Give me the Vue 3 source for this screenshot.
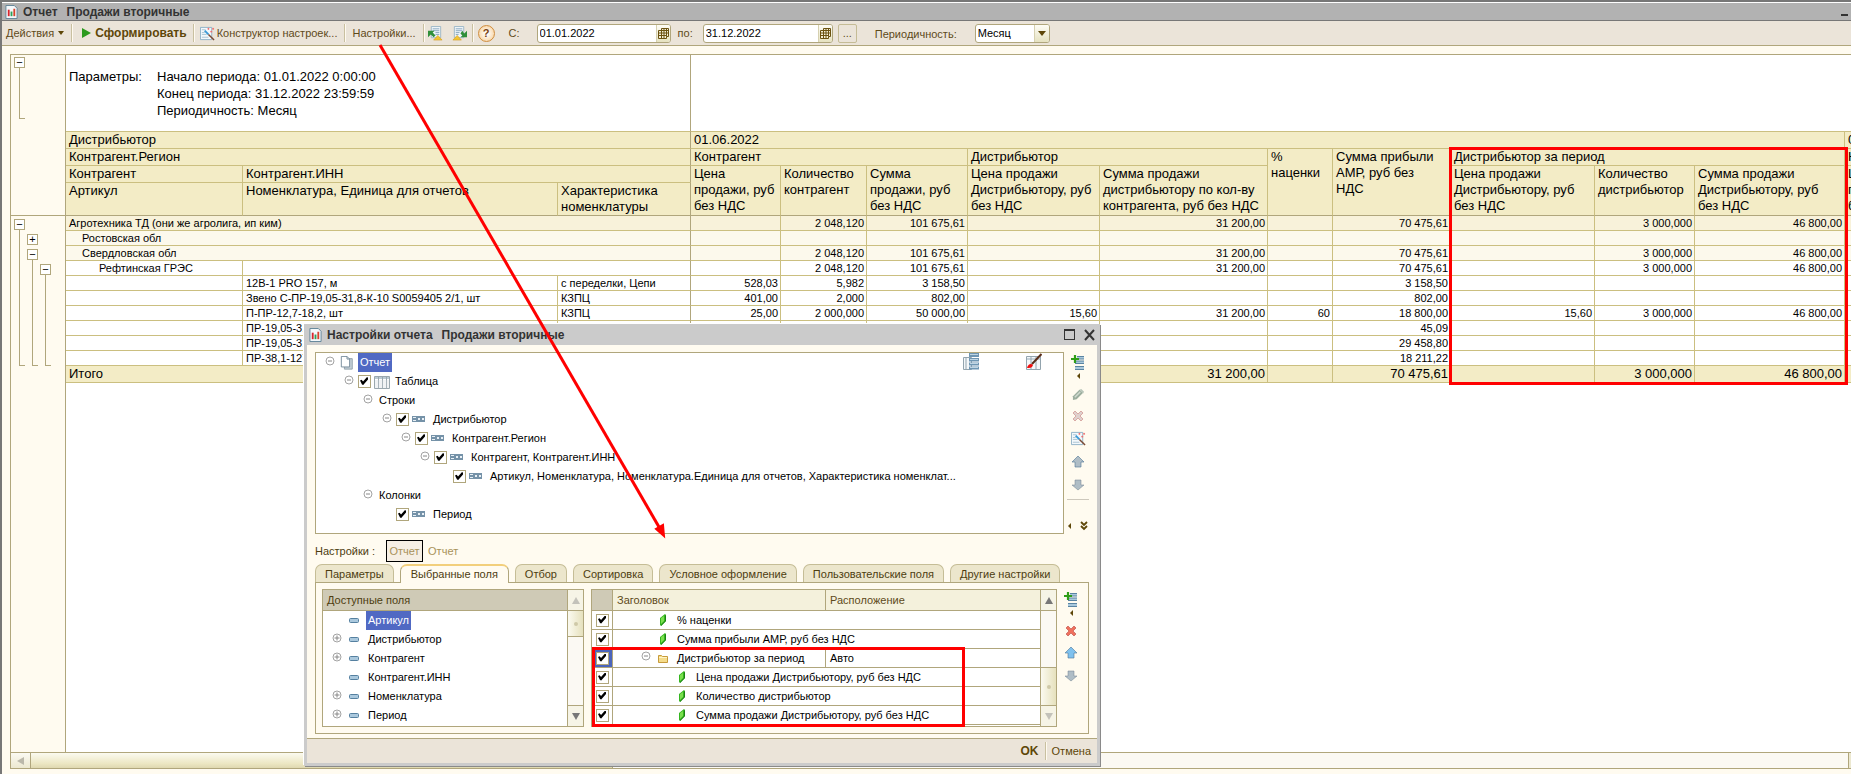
<template>
  <div class="window">
    <svg class="symbols" aria-hidden="true">
      <symbol id="i-report" viewBox="0 0 14 15">
        <path d="M1 .5h9l3 3v11H1z" fill="#f4f8fb" stroke="#5f8397" />
        <path d="M3 5h2v7H3z" fill="#d8262c" />
        <path d="M6 7h2v5H6z" fill="#2fa05a" />
        <path d="M9 4h2v8H9z" fill="#d8432c" />
      </symbol>
      <symbol id="i-wand" viewBox="0 0 16 16">
        <path d="M.5 1.500h12v13H.5z" fill="#f3f8fb" stroke="#8fb1c6" />
        <path d="M2 4h4M2 7h3M2 9h5M2 12h7" stroke="#a9c3d2" />
        <path d="M5 5l4 4" stroke="#3c9ad6" stroke-width="2" />
        <path d="M9 9l6 6" stroke="#7a4a35" stroke-width="1.600" />
        <path d="M8 3h2M9 2v2M13 3h2M14 2v2M11 6h2M12 5v2" stroke="#f06a6a" />
      </symbol>
      <symbol id="i-save" viewBox="0 0 16 16">
        <path d="M3.500.5h10v12h-10z" fill="#eef4f8" stroke="#9db6c6" />
        <path d="M5 3h7M5 5h7M8 7h4M8 9h4" stroke="#86a8bf" />
        <path d="M0 5h7L5 7l3 3-2 2-3-3-3 3z" fill="#2f8f3a" />
        <path d="M10.500 10l4.500 5H6z" fill="#f2c533" stroke="#d09a1c" stroke-width=".6" />
      </symbol>
      <symbol id="i-load" viewBox="0 0 16 16">
        <path d="M2.500.5h10v12h-10z" fill="#eef4f8" stroke="#9db6c6" />
        <path d="M4 3h7M4 5h7M4 7h4M4 9h3" stroke="#86a8bf" />
        <path d="M16 12H9l2-2-2-2 2-3 2 3 3-3z" fill="#2f8f3a" />
        <path d="M5.500 10l4.500 5H1z" fill="#f2c533" stroke="#d09a1c" stroke-width=".6" />
      </symbol>
      <symbol id="i-calendar" viewBox="0 0 11 11">
        <path d="M3.500.5h7v8h-2v2h-8v-8h3z" fill="#f4efd8" stroke="#6b5210" />
        <path d="M1 5h9.500M1 7.500h8M3.500 2v8.500M6 .5v10M8.500 .5v8M3 2.500h7" stroke="#6b5210" />
      </symbol>
      <symbol id="i-minus" viewBox="0 0 10 10">
        <circle cx="5" cy="5" r="4" fill="#fff" stroke="#a3a3a3" />
        <path d="M3 5h4" stroke="#888" />
      </symbol>
      <symbol id="i-plus" viewBox="0 0 10 10">
        <circle cx="5" cy="5" r="4" fill="#fff" stroke="#a3a3a3" />
        <path d="M2.500 5h5M5 2.500v5" stroke="#888" />
      </symbol>
      <symbol id="i-pages" viewBox="0 0 16 16">
        <path d="M5 3h9v12H5z" fill="#c5d0d8" stroke="#8c9ba6" />
        <path d="M1.500.5H8l3 3v9H1.500z" fill="#fff" stroke="#6d8494" />
        <path d="M8 .5v3h3" fill="none" stroke="#6d8494" />
      </symbol>
      <symbol id="i-grid" viewBox="0 0 16 14">
        <path d="M.5 1.500h15v12H.5z" fill="#fff" stroke="#9aa7ae" />
        <path d="M1 2h14v2H1z" fill="#bccbd4" />
        <path d="M4.500 2v11M8.500 2v11M12.500 2v11" stroke="#9aa7ae" />
        <path d="M1 6h14M1 8h14M1 10h14M1 12h14" stroke="#ccd5da" stroke-width=".6" />
      </symbol>
      <symbol id="i-group" viewBox="0 0 16 14">
        <path d="M0 3h13v6H0z" fill="#7592a8" />
        <path d="M1 4h3v1H1zM1 7h3v1H1zM6 5h2v2H6zM10 5h2v2h-2z" fill="#e8f0f6" />
      </symbol>
      <symbol id="i-field" viewBox="0 0 10 5">
        <rect x=".5" y=".5" width="9" height="4" rx="1" fill="#aac8dd" stroke="#5580a0" />
      </symbol>
      <symbol id="i-resource" viewBox="0 0 8 12">
        <path d="M1 4l5-4 1 1v6l-5 5-1-1z" fill="#35b520" />
        <path d="M2 4l3-2v5l-3 3z" fill="#7be04f" />
        <path d="M6 1l1 1v5l-5 5v-1l4-4z" fill="#1c7f14" />
      </symbol>
      <symbol id="i-folder" viewBox="0 0 10 9">
        <path d="M.5 1.500h3l1 1h5v6h-9z" fill="#f5dc8a" stroke="#c79b3b" />
        <path d="M1 3.500h8" stroke="#fff4c8" />
      </symbol>
      <symbol id="i-add" viewBox="0 0 14 16">
        <path d="M6 1h7v3H6zM4 6h9v3H4zM4 11h9v4H4z" fill="#a9c8dc" />
        <path d="M6 1.500h7M4 8.500h9M4 14.500h9M6 4h7M4 11.500h9M5 6h8" stroke="#5a84a2" />
        <path d="M4 0v8M0 4h8" stroke="#2f9e18" stroke-width="2.200" />
      </symbol>
      <symbol id="i-pencil" viewBox="0 0 14 14">
        <path d="M1 13V9l7-7 4 3-7 7z" fill="#9cae9e" />
        <path d="M3 10l6-6" stroke="#d0dad0" stroke-width="1.500" />
        <path d="M8 2l2-1 3 3-1 2z" fill="#b9c6ba" />
      </symbol>
      <symbol id="i-delete" viewBox="0 0 12 12">
        <path d="M3 1l3 3 3-3 2 2-3 3 3 3-2 2-3-3-3 3-2-2 3-3-3-3z" fill="currentColor" stroke="#a33" stroke-opacity=".5" />
      </symbol>
      <symbol id="i-up" viewBox="0 0 14 14">
        <path d="M7 1l6 6h-3v5H4V7H1z" fill="currentColor" stroke="#4f7796" stroke-opacity=".6" />
      </symbol>
      <symbol id="i-down" viewBox="0 0 14 14">
        <path d="M7 12L1 7h3V2h6v5h3z" fill="currentColor" stroke="#6f8290" stroke-opacity=".5" />
      </symbol>
      <symbol id="i-level" viewBox="0 0 16 17">
        <path d="M.5 4.500h8v12h-8zM3 4v12" fill="#f4f7f9" stroke="#93a4ae" />
        <path d="M6 0h10v4H6zM6 5h10v3.500H6zM6 9.500h10v3H6zM6 13.500h10v3H6z" fill="#6e96b3" />
        <path d="M7 1.500h8M7 6.500h8M7 10.500h8M7 14.500h8" stroke="#bdd4e3" />
      </symbol>
      <symbol id="i-brush" viewBox="0 0 16 17">
        <path d="M.5 3.500h14v13H.5z" fill="#f4f7f9" stroke="#93a4ae" />
        <path d="M1 5h13v2H1z" fill="#c6d2da" />
        <path d="M5 4v12M10 4v12" stroke="#93a4ae" />
        <path d="M6 11L15.500 1" stroke="#5a2d18" stroke-width="2" />
        <path d="M1 15c1-4 4-5 6-3-1 3-3 3-6 3z" fill="#f20d0d" />
      </symbol>
    </svg>

    <header class="titlebar">
      <svg class="title-icon"><use href="#i-report" /></svg>
      <span>Отчет</span>
      <span>Продажи вторичные</span>
      <button type="button" class="minimize" aria-label="Свернуть"></button>
    </header>

    <div class="toolbar">
      <button type="button" class="tool">Действия<i class="caret"></i></button>
      <span class="sep"></span>
      <button type="button" class="tool tool-run"><i class="play"></i>Сформировать</button>
      <span class="sep"></span>
      <button type="button" class="tool tool-wand"><svg class="i16"><use href="#i-wand" /></svg>Конструктор настроек...</button>
      <span class="sep"></span>
      <button type="button" class="tool">Настройки...</button>
      <span class="sep"></span>
      <button type="button" class="tool tool-icon" aria-label="Сохранить настройки"><svg class="i16"><use href="#i-save" /></svg></button>
      <button type="button" class="tool tool-icon" aria-label="Загрузить настройки"><svg class="i16"><use href="#i-load" /></svg></button>
      <span class="sep sep-tight"></span>
      <button type="button" class="help" aria-label="Справка">?</button>
      <label for="date-from" class="lbl-from">С:</label>
      <div class="field field-from">
        <input id="date-from" v-model="dateFrom" type="text" />
        <button type="button" class="field-btn" aria-label="Календарь"><svg><use href="#i-calendar" /></svg></button>
      </div>
      <label for="date-to" class="lbl-to">по:</label>
      <div class="field field-to">
        <input id="date-to" v-model="dateTo" type="text" />
        <button type="button" class="field-btn" aria-label="Календарь"><svg><use href="#i-calendar" /></svg></button>
      </div>
      <button type="button" class="dots" aria-label="Выбрать период">...</button>
      <label for="period" class="lbl-period">Периодичность:</label>
      <div class="field field-period">
        <select id="period" v-model="period">
          <option>Месяц</option>
          <option>Квартал</option>
          <option>Год</option>
        </select>
        <span class="field-btn"><i class="caret caret-big"></i></span>
      </div>
    </div>

    <main class="sheet">
      <div class="sheet-body">
        <div class="outline">
          <div class="outline-head">
            <div class="bracket"><button type="button" class="box" aria-label="Свернуть">−</button><i class="stem"></i></div>
          </div>
          <div class="outline-rows">
            <div class="bracket"><button type="button" class="box" aria-label="Свернуть">−</button><i class="stem"></i></div>
            <div class="bracket bracket-2">
              <button type="button" class="box box-plus" aria-label="Развернуть">+</button>
              <button type="button" class="box" aria-label="Свернуть">−</button><i class="stem"></i>
            </div>
            <div class="bracket bracket-3"><button type="button" class="box" aria-label="Свернуть">−</button><i class="stem"></i></div>
          </div>
        </div>

        <div class="table-area">
          <table class="report">
            <colgroup>
              <col v-for="(w, i) in colWidths" :key="i" :style="{ width: w + 'px' }" />
            </colgroup>
            <thead>
              <tr class="params-row">
                <td colspan="3" class="strong">
                  <div class="params">
                    <span>Параметры:</span>
                    <div>
                      <div>Начало периода: 01.01.2022 0:00:00</div>
                      <div>Конец периода: 31.12.2022 23:59:59</div>
                      <div>Периодичность: Месяц</div>
                    </div>
                  </div>
                </td>
                <td colspan="11"></td>
              </tr>
              <tr>
                <th colspan="3" class="strong">Дистрибьютор</th>
                <th colspan="10">01.06.2022</th>
                <th>01.07.2022</th>
              </tr>
              <tr>
                <th colspan="3" class="strong">Контрагент.Регион</th>
                <th colspan="3">Контрагент</th>
                <th colspan="2">Дистрибьютор</th>
                <th rowspan="3" class="last">%<br />наценки</th>
                <th rowspan="3" class="last">Сумма прибыли<br />АМР, руб без<br />НДС</th>
                <th colspan="3">Дистрибьютор за период</th>
                <th>Контрагент</th>
              </tr>
              <tr>
                <th>Контрагент</th>
                <th colspan="2" class="strong">Контрагент.ИНН</th>
                <th rowspan="2" class="last">Цена<br />продажи, руб<br />без НДС</th>
                <th rowspan="2" class="last">Количество<br />контрагент</th>
                <th rowspan="2" class="last">Сумма<br />продажи, руб<br />без НДС</th>
                <th rowspan="2" class="last">Цена продажи<br />Дистрибьютору, руб<br />без НДС</th>
                <th rowspan="2" class="last">Сумма продажи<br />дистрибьютору по кол-ву<br />контрагента, руб без НДС</th>
                <th rowspan="2" class="last">Цена продажи<br />Дистрибьютору, руб<br />без НДС</th>
                <th rowspan="2" class="last">Количество<br />дистрибьютор</th>
                <th rowspan="2" class="last">Сумма продажи<br />Дистрибьютору, руб<br />без НДС</th>
                <th rowspan="2" class="last">Цена<br />продажи, руб<br />без НДС</th>
              </tr>
              <tr class="tall">
                <th class="last">Артикул</th>
                <th class="last">Номенклатура, Единица для отчетов</th>
                <th class="last strong">Характеристика<br />номенклатуры</th>
              </tr>
            </thead>
            <tbody>
              <tr v-for="(row, i) in rows" :key="i" :class="row.kind">
                <td
                  v-for="(cell, j) in row.head"
                  :key="'h' + j"
                  :colspan="cell.span"
                  :class="{ strong: j === row.head.length - 1 }"
                >{{ cell.text }}</td>
                <td v-for="(v, j) in row.values" :key="'v' + j" class="num">{{ v }}</td>
              </tr>
            </tbody>
          </table>
        </div>
      </div>

      <div class="hscroll">
        <button type="button" class="hscroll-btn" aria-label="Влево"><i class="arrow-left"></i></button>
        <div class="hscroll-track"><div class="hscroll-thumb"></div></div>
        <span class="hscroll-end"></span>
      </div>
    </main>

    <section class="dialog" role="dialog" aria-label="Настройки отчета">
      <header class="dialog-title">
        <svg class="title-icon"><use href="#i-report" /></svg>
        <span>Настройки отчета</span>
        <span>Продажи вторичные</span>
        <button type="button" class="win-btn win-max" aria-label="Развернуть"><i></i></button>
        <button type="button" class="win-btn" aria-label="Закрыть">
          <svg width="12" height="12" viewBox="0 0 12 12"><path d="M1 1l9 10M10 1L1 11" stroke="#333" stroke-width="2" /></svg>
        </button>
      </header>

      <div class="dialog-body">
        <div class="upper">
          <div class="tree">
            <div
              v-for="(n, i) in tree"
              :key="i"
              class="tree-row"
              :style="{ paddingLeft: 7 + n.level * 19 + 'px' }"
            >
              <button type="button" class="exp" :class="{ blank: !n.open }" aria-label="Свернуть"><svg><use href="#i-minus" /></svg></button>
              <label class="node">
                <input v-if="n.check" v-model="n.on" type="checkbox" class="check" />
                <svg v-if="n.icon" class="node-icon"><use :href="'#i-' + n.icon" /></svg>
                <span class="node-text" :class="{ selected: n.selected }">{{ n.text }}</span>
              </label>
            </div>
            <div class="tree-icons">
              <svg><use href="#i-level" /></svg>
              <svg><use href="#i-brush" /></svg>
            </div>
          </div>
          <div class="side">
            <button type="button" aria-label="Добавить"><svg width="14" height="16"><use href="#i-add" /></svg><i class="tri"></i></button>
            <button type="button" aria-label="Изменить"><svg width="13" height="13"><use href="#i-pencil" /></svg></button>
            <button type="button" class="muted-red" aria-label="Удалить"><svg width="12" height="12"><use href="#i-delete" /></svg></button>
            <button type="button" aria-label="Конструктор"><svg class="i16"><use href="#i-wand" /></svg></button>
            <button type="button" class="muted" aria-label="Вверх"><svg width="14" height="14"><use href="#i-up" /></svg></button>
            <button type="button" class="muted" aria-label="Вниз"><svg width="14" height="14"><use href="#i-down" /></svg></button>
            <span class="side-line"></span>
            <div class="side-more">
              <i class="tri"></i>
              <svg width="8" height="10" viewBox="0 0 8 10"><path d="M1 1l3 3 3-3M1 5l3 3 3-3" fill="none" stroke="#5e4708" stroke-width="1.800" /></svg>
            </div>
          </div>
        </div>

        <div class="path">
          <span>Настройки :</span>
          <button type="button" class="path-btn path-active">Отчет</button>
          <button type="button" class="path-btn">Отчет</button>
        </div>

        <div class="tabs" role="tablist">
          <button
            v-for="t in tabs"
            :key="t"
            type="button"
            role="tab"
            class="tab"
            :class="{ active: t === activeTab }"
            @click="activeTab = t"
          >{{ t }}</button>
        </div>

        <div class="panel">
          <div class="fields">
            <div class="fields-main">
              <div class="fields-head">Доступные поля</div>
              <div v-for="f in fields" :key="f.text" class="tree-row fields-row">
                <button type="button" class="exp" :class="{ blank: !f.more }" aria-label="Развернуть"><svg><use href="#i-plus" /></svg></button>
                <svg class="field-icon"><use href="#i-field" /></svg>
                <span class="node-text" :class="{ selected: f.selected }">{{ f.text }}</span>
              </div>
            </div>
            <div class="vscroll">
              <button type="button" class="vbtn off" aria-label="Вверх"><i class="arrow-up"></i></button>
              <div class="vthumb vthumb-short"><i></i></div>
              <div class="vtrack"></div>
              <button type="button" class="vbtn vbtn-down" aria-label="Вниз"><i class="arrow-down"></i></button>
            </div>
          </div>

          <div class="chosen">
            <table>
              <colgroup>
                <col class="c-check" />
                <col class="c-title" />
                <col />
              </colgroup>
              <thead>
                <tr>
                  <th class="corner"></th>
                  <th>Заголовок</th>
                  <th>Расположение</th>
                </tr>
              </thead>
              <tbody>
                <tr v-for="c in chosen" :key="c.text">
                  <td class="check-cell" :class="{ current: c.place }"><input v-model="c.on" type="checkbox" class="check" :aria-label="c.text" /></td>
                  <td :colspan="c.place ? 1 : 2">
                    <div class="item" :style="{ paddingLeft: 26 + c.level * 19 + 'px' }">
                      <button type="button" class="exp" :class="{ blank: !c.place }" aria-label="Свернуть"><svg><use href="#i-minus" /></svg></button>
                      <span class="item-icon">
                        <svg v-if="c.place" width="10" height="9"><use href="#i-folder" /></svg>
                        <svg v-else width="8" height="12"><use href="#i-resource" /></svg>
                      </span>
                      <span>{{ c.text }}</span>
                    </div>
                  </td>
                  <td v-if="c.place" class="place">{{ c.place }}</td>
                </tr>
              </tbody>
            </table>
            <div class="vscroll">
              <button type="button" class="vbtn" aria-label="Вверх"><i class="arrow-up"></i></button>
              <div class="vtrack"></div>
              <div class="vthumb vthumb-long"><i></i></div>
              <button type="button" class="vbtn off" aria-label="Вниз"><i class="arrow-down"></i></button>
            </div>
          </div>

          <div class="side side-low">
            <button type="button" aria-label="Добавить"><svg width="14" height="16"><use href="#i-add" /></svg><i class="tri"></i></button>
            <button type="button" class="red" aria-label="Удалить"><svg width="12" height="12"><use href="#i-delete" /></svg></button>
            <button type="button" class="blue" aria-label="Вверх"><svg width="14" height="14"><use href="#i-up" /></svg></button>
            <button type="button" class="muted" aria-label="Вниз"><svg width="14" height="14"><use href="#i-down" /></svg></button>
          </div>
        </div>
      </div>

      <footer class="dialog-foot">
        <button type="button" class="ok">OK</button>
        <span class="sep"></span>
        <button type="button">Отмена</button>
      </footer>
    </section>

    <!-- красные пометки поверх окон -->
    <svg class="marks" aria-hidden="true">
      <rect x="1450.500" y="148.500" width="396" height="235" />
      <rect x="593.500" y="648.500" width="370" height="77" />
      <path d="M380 45L659 527" />
      <path class="tip" d="M664 536L656 529L663 525z" />
    </svg>
  </div>
</template>

<script setup>
import { ref } from 'vue'

const dateFrom = ref('01.01.2022')
const dateTo = ref('31.12.2022')
const period = ref('Месяц')

const colWidths = [177, 315, 133, 90, 86, 101, 132, 168, 65, 118, 144, 100, 150, 90]

const leaf = (name, feature, values) => ({
  kind: 'leaf',
  head: [{ text: '', span: 1 }, { text: name, span: 1 }, { text: feature, span: 1 }],
  values
})

const rows = [
  {
    kind: 'lvl1',
    head: [{ text: 'Агротехника ТД (они же агролига, ип ким)', span: 3 }],
    values: ['', '2 048,120', '101 675,61', '', '31 200,00', '', '70 475,61', '', '3 000,000', '46 800,00', '']
  },
  {
    kind: 'lvl2',
    head: [{ text: 'Ростовская обл', span: 3 }],
    values: ['', '', '', '', '', '', '', '', '', '', '']
  },
  {
    kind: 'lvl2',
    head: [{ text: 'Свердловская обл', span: 3 }],
    values: ['', '2 048,120', '101 675,61', '', '31 200,00', '', '70 475,61', '', '3 000,000', '46 800,00', '']
  },
  {
    kind: 'lvl3',
    head: [{ text: 'Рефтинская ГРЭС', span: 1 }, { text: '', span: 2 }],
    values: ['', '2 048,120', '101 675,61', '', '31 200,00', '', '70 475,61', '', '3 000,000', '46 800,00', '']
  },
  leaf('12В-1 PRO 157, м', 'с переделки, Цепи', ['528,03', '5,982', '3 158,50', '', '', '', '3 158,50', '', '', '', '']),
  leaf('Звено С-ПР-19,05-31,8-К-10 S0059405 2/1, шт', 'КЗПЦ', ['401,00', '2,000', '802,00', '', '', '', '802,00', '', '', '', '']),
  leaf('П-ПР-12,7-18,2, шт', 'КЗПЦ', ['25,00', '2 000,000', '50 000,00', '15,60', '31 200,00', '60', '18 800,00', '15,60', '3 000,000', '46 800,00', '']),
  leaf('ПР-19,05-31', '', ['', '', '', '', '', '', '45,09', '', '', '', '']),
  leaf('ПР-19,05-31', '', ['', '', '', '', '', '', '29 458,80', '', '', '', '']),
  leaf('ПР-38,1-127', '', ['', '', '', '', '', '', '18 211,22', '', '', '', '']),
  {
    kind: 'total',
    head: [{ text: 'Итого', span: 3 }],
    values: ['', '', '', '', '31 200,00', '', '70 475,61', '', '3 000,000', '46 800,00', '']
  }
]

const tree = ref([
  { level: 0, open: true, icon: 'pages', text: 'Отчет', selected: true },
  { level: 1, open: true, check: true, on: true, icon: 'grid', text: 'Таблица' },
  { level: 2, open: true, text: 'Строки' },
  { level: 3, open: true, check: true, on: true, icon: 'group', text: 'Дистрибьютор' },
  { level: 4, open: true, check: true, on: true, icon: 'group', text: 'Контрагент.Регион' },
  { level: 5, open: true, check: true, on: true, icon: 'group', text: 'Контрагент, Контрагент.ИНН' },
  { level: 6, check: true, on: true, icon: 'group', text: 'Артикул, Номенклатура, Номенклатура.Единица для отчетов, Характеристика номенклат...' },
  { level: 2, open: true, text: 'Колонки' },
  { level: 3, check: true, on: true, icon: 'group', text: 'Период' }
])

const tabs = ['Параметры', 'Выбранные поля', 'Отбор', 'Сортировка', 'Условное оформление', 'Пользовательские поля', 'Другие настройки']
const activeTab = ref('Выбранные поля')

const fields = [
  { text: 'Артикул', selected: true },
  { text: 'Дистрибьютор', more: true },
  { text: 'Контрагент', more: true },
  { text: 'Контрагент.ИНН' },
  { text: 'Номенклатура', more: true },
  { text: 'Период', more: true }
]

const chosen = ref([
  { level: 0, on: true, text: '% наценки' },
  { level: 0, on: true, text: 'Сумма прибыли АМР, руб без НДС' },
  { level: 0, on: true, text: 'Дистрибьютор за период', place: 'Авто' },
  { level: 1, on: true, text: 'Цена продажи Дистрибьютору, руб без НДС' },
  { level: 1, on: true, text: 'Количество дистрибьютор' },
  { level: 1, on: true, text: 'Сумма продажи Дистрибьютору, руб без НДС' }
])
</script>

<style>
body {
  margin: 0;
  overflow: hidden;
}
</style>

<style scoped>
.window {
  position: relative;
  box-sizing: border-box;
  display: flex;
  flex-direction: column;
  height: 100vh;
  border-top: 2px solid #777;
  border-left: 2px solid #777;
  background: #fffbf0;
  font-family: "Liberation Sans", Arial, sans-serif;
  font-size: 11px;
  color: #000;
  overflow: hidden;
}

.symbols {
  position: absolute;
  width: 0;
  height: 0;
}

button {
  font: inherit;
  color: inherit;
  margin: 0;
  padding: 0;
  border: 0;
  background: none;
}

svg {
  display: block;
  flex: none;
}

.i16 {
  width: 15px;
  height: 15px;
}

.titlebar,
.dialog-title {
  display: flex;
  align-items: center;
  gap: 9px;
  font-size: 12px;
  font-weight: bold;
  color: #333;
}

.titlebar {
  flex: none;
  height: 17px;
  padding: 0 3px;
  border-top: 1px solid #fff;
  border-bottom: 1px solid #777;
  background: #b2b2b2;
}

.title-icon {
  width: 13px;
  height: 14px;
  margin-right: -4px;
}

.minimize {
  width: 7px;
  height: 2px;
  margin: 6px 0 0 auto;
  background: #333;
}

.toolbar {
  flex: none;
  display: flex;
  align-items: center;
  height: 24px;
  padding: 0 3px;
  border-bottom: 1px solid #b0a67c;
  background: #ebe4d9;
  color: #5e4a1a;
}

.tool {
  display: flex;
  align-items: center;
  padding: 0 1px;
  white-space: nowrap;
}

.tool-run {
  gap: 4px;
  padding: 0 0 0 4px;
  font-size: 12px;
  font-weight: bold;
  color: #5e4708;
}

.tool-wand {
  gap: 2px;
  padding-left: 0;
}

.tool-icon {
  width: 24px;
}

.sep {
  flex: none;
  width: 1px;
  height: 18px;
  margin: 0 5px 0 6px;
  background: #c9c0a0;
  border-right: 1px solid #fffaf0;
}

.sep-tight {
  margin: 0 4px 0 -3px;
}

.tool + .sep + .tool-icon {
  margin-left: -3px;
}

.caret {
  margin-left: 4px;
  border: 3px solid transparent;
  border-top: 4px solid #5e4708;
  border-bottom: 0;
}

.caret-big {
  margin: 0;
  border-width: 5px 4px 0;
}

.play {
  border: 5px solid transparent;
  border-left: 9px solid #2c9a1e;
  border-right: 0;
}

.help {
  width: 17px;
  height: 17px;
  border: 1px solid #cf8d3e;
  border-radius: 50%;
  background: radial-gradient(#fff 10%, #f7c98a);
  font-weight: bold;
  color: #7a4210;
  line-height: 15px;
}

.lbl-from {
  margin: 0 17px 0 14px;
}

.lbl-to {
  margin: 0 10px 0 7px;
}

.lbl-period {
  margin: 2px 18px 0 18px;
}

.field {
  box-sizing: border-box;
  display: flex;
  height: 19px;
  border: 1px solid #b0a67c;
  border-radius: 3px;
  background: #fff;
  overflow: hidden;
}

.field-from {
  width: 134px;
}

.field-to {
  width: 130px;
}

.field-period {
  width: 75px;
}

.field input,
.field select {
  flex: 1;
  min-width: 0;
  padding: 0 2px;
  border: 0;
  outline: 0;
  background: none;
  font: inherit;
  color: #000;
  appearance: none;
}

.field-btn {
  flex: none;
  display: flex;
  align-items: center;
  justify-content: center;
  width: 14px;
  border-left: 1px solid #d6d0b0;
  background: linear-gradient(#fdfcf5, #e6e2c0);
}

.field-btn svg {
  width: 11px;
  height: 11px;
}

.dots {
  box-sizing: border-box;
  width: 19px;
  height: 19px;
  margin-left: 5px;
  border: 1px solid #c5bc96;
  border-radius: 2px;
}

/* табличный документ */
.sheet {
  flex: 1;
  display: flex;
  flex-direction: column;
  min-height: 0;
  margin: 8px 0 5px 8px;
  border: 1px solid #b0a67c;
  border-right: 0;
}

.sheet-body {
  flex: 1;
  display: flex;
  min-height: 0;
}

.outline {
  flex: none;
  width: 54px;
  border-right: 1px solid #b0a67c;
}

.outline-head {
  box-sizing: border-box;
  height: 161px;
  padding: 2px 3px 0;
  border-bottom: 1px solid #b0a67c;
}

.outline-head .bracket {
  height: 62px;
}

.outline-rows {
  display: flex;
  gap: 2px;
  height: 147px;
  padding: 3px 3px 0;
}

.bracket {
  display: flex;
  flex-direction: column;
  width: 11px;
}

.bracket-2 {
  padding-top: 15px;
}

.bracket-3 {
  padding-top: 45px;
}

.box {
  box-sizing: border-box;
  flex: none;
  width: 11px;
  height: 11px;
  border: 1px solid #b0a67c;
  background: #fff;
  line-height: 9px;
  text-align: center;
}

.box-plus {
  margin-bottom: 4px;
}

.stem {
  flex: 1;
  width: 5px;
  margin-left: 5px;
  border-left: 1px solid #b0a67c;
  border-bottom: 1px solid #b0a67c;
}

.table-area {
  flex: 1;
  min-width: 0;
  background: #fff;
  overflow: hidden;
}

.report {
  width: 1869px;
  table-layout: fixed;
  border-collapse: separate;
  border-spacing: 0;
}

.report th,
.report td {
  padding: 0 2px 0 3px;
  border-right: 1px solid #cbbf80;
  border-bottom: 1px solid #cbbf80;
  text-align: left;
  vertical-align: top;
  white-space: nowrap;
}

.report .strong {
  border-right-color: #b0a67c;
}

.report th {
  height: 16px;
  background: #f3ecc6;
  font-size: 13px;
  font-weight: normal;
  line-height: 16px;
}

.report .last {
  border-bottom-color: #b0a67c;
}

.report .tall th {
  height: 32px;
}

.report .params-row td {
  height: 76px;
}

.params {
  display: flex;
  padding-top: 13px;
  font-size: 13px;
  line-height: 17px;
}

.params > span {
  width: 88px;
}

.report tbody td {
  height: 14px;
  line-height: 14px;
}

.report .num {
  text-align: right;
}

.report .lvl1 td {
  background: #f8f2da;
}

.report .lvl2 td {
  background: #fcf9ec;
}

.report .lvl2 td:first-child {
  padding-left: 16px;
}

.report .lvl3 td:first-child {
  padding-left: 33px;
}

.report .total td {
  height: 16px;
  background: #f3ecc6;
  font-size: 13px;
  line-height: 16px;
}

.hscroll {
  flex: none;
  display: flex;
  height: 15px;
  border-top: 1px solid #b0a67c;
  background: #fbf9f3;
}

.hscroll-btn {
  width: 20px;
  border-right: 1px solid #b0a67c;
  background: linear-gradient(#fbfaf2, #ece8d0);
}

.arrow-left {
  display: block;
  width: 0;
  margin-left: 6px;
  border: 4px solid transparent;
  border-right: 7px solid #bbb8aa;
  border-left: 0;
}

.hscroll-track {
  flex: 1;
}

.hscroll-thumb {
  width: 32%;
  height: 100%;
  border-right: 1px solid #b0a67c;
  background: linear-gradient(#fbfaf0, #ece7c3 70%, #dfd8b0);
}

.hscroll-end {
  width: 2px;
  border-left: 1px solid #b0a67c;
  background: #ece8d0;
}

/* окно настроек */
.dialog {
  position: absolute;
  left: 302px;
  top: 322px;
  box-sizing: border-box;
  width: 796px;
  border: 3px solid #cbcbcb;
  border-top: 0;
  background: #fffbf0;
  box-shadow: 1px 1px 0 #8a8a8a, -1px -1px 0 #fff;
}

.dialog-title {
  height: 21px;
  padding: 0 1px 0 2px;
  background: #cbcbcb;
}

.win-btn {
  display: flex;
  align-items: center;
  justify-content: center;
  width: 12px;
}

.win-max {
  margin-left: auto;
}

.win-max i {
  box-sizing: border-box;
  width: 11px;
  height: 11px;
  border: 1px solid #333;
  border-top-width: 2px;
}

.dialog-body {
  padding: 7px 8px 4px;
}

.upper {
  display: flex;
  gap: 3px;
}

.tree {
  position: relative;
  box-sizing: border-box;
  flex: 1;
  height: 182px;
  border: 1px solid #b0a67c;
  background: #fff;
}

.tree-row,
.node {
  display: flex;
  align-items: center;
  height: 19px;
  white-space: nowrap;
}

.exp {
  flex: none;
  width: 12px;
  height: 12px;
  padding-left: 2px;
  margin: 0 4px 4px 0;
}

.exp svg {
  width: 10px;
  height: 10px;
}

.blank {
  visibility: hidden;
}

.check {
  flex: none;
  appearance: none;
  box-sizing: border-box;
  width: 13px;
  height: 13px;
  margin: 0 3px 0 0;
  border: 1px solid #b0a67c;
  background: #fff;
}

.check:checked::after {
  content: "";
  display: block;
  width: 8px;
  height: 8px;
  margin: 1px;
  background: #000;
  clip-path: polygon(0 45%, 20% 35%, 38% 55%, 88% 0, 100% 10%, 100% 30%, 40% 100%, 25% 95%);
}

.node-icon {
  width: 16px;
  height: 14px;
  margin-right: 3px;
}

.node-text {
  padding: 0 2px;
  line-height: 19px;
}

.selected {
  background: #5069c3;
  color: #fff;
}

.tree-icons {
  position: absolute;
  top: 0;
  right: 21px;
  display: flex;
  gap: 47px;
}

.tree-icons svg {
  width: 16px;
  height: 17px;
}

.side {
  flex: none;
  box-sizing: border-box;
  display: flex;
  flex-direction: column;
  align-items: center;
  gap: 9px;
  width: 22px;
  padding-top: 3px;
}

.side button {
  display: flex;
  flex-direction: column;
  align-items: center;
  gap: 2px;
}

.tri {
  border: 3px solid transparent;
  border-right-color: #5e4708;
  border-left: 0;
}

.side-line {
  width: 22px;
  height: 1px;
  margin-top: -2px;
  background: #cdc8bc;
}

.side-more {
  display: flex;
  align-items: center;
  gap: 9px;
  margin-top: 12px;
}

.muted {
  color: #afbdc6;
}

.muted-red {
  color: #d2bfbf;
  opacity: 0.7;
}

.red {
  color: #f0705c;
}

.blue {
  color: #7fc1ee;
}

.path {
  display: flex;
  align-items: center;
  height: 22px;
  margin: 6px 0 2px;
  color: #4d3d10;
}

.path-btn {
  color: #a8925a;
  padding: 0 5px;
}

.path-active {
  box-sizing: border-box;
  width: 37px;
  height: 22px;
  padding: 0;
  margin-left: 11px;
  border: 1px solid #000;
  background: #f6efe4;
}

.tabs {
  display: flex;
  gap: 6px;
}

.tab {
  box-sizing: border-box;
  height: 18px;
  padding: 0 9px;
  border: 1px solid #c5bd96;
  border-bottom: 0;
  border-radius: 7px 7px 0 0;
  background: #ece6cc;
  color: #4d3d10;
  white-space: nowrap;
}

.tab.active {
  height: 19px;
  margin-bottom: -1px;
  padding: 0 10px 2px;
  border-color: #b0a67c;
  border-top: 2px solid #f2cf7c;
  background: #fffbf0;
  z-index: 1;
}

.panel {
  display: flex;
  padding: 6px;
  border: 1px solid #b0a67c;
}

.fields {
  box-sizing: border-box;
  display: flex;
  width: 262px;
  margin-right: 7px;
  border: 1px solid #b0a67c;
  background: #fff;
}

.fields-main {
  flex: 1;
}

.fields-head {
  height: 20px;
  padding-left: 4px;
  border-bottom: 1px solid #b0a67c;
  background: #cfcab6;
  line-height: 20px;
  color: #4d3d10;
}

.fields-row {
  padding-left: 7px;
}

.field-icon {
  width: 10px;
  height: 5px;
  margin: 0 7px 0 3px;
}

.vscroll {
  flex: none;
  display: flex;
  flex-direction: column;
  width: 15px;
  border-left: 1px solid #b0a67c;
  background: #fbf9f3;
}

.vbtn {
  box-sizing: border-box;
  flex: none;
  display: flex;
  align-items: center;
  justify-content: center;
  height: 21px;
  border-bottom: 1px solid #b0a67c;
  background: #f6f4e6;
}

.vbtn:last-child {
  border-top: 1px solid #b0a67c;
  border-bottom: 0;
}

.arrow-up {
  border: 4px solid transparent;
  border-bottom: 7px solid #777;
  border-top: 0;
}

.arrow-down {
  border: 4px solid transparent;
  border-top: 7px solid #777;
  border-bottom: 0;
}

.off i {
  opacity: 0.4;
}

.vtrack {
  flex: 1;
}

.vthumb {
  display: flex;
  align-items: center;
  justify-content: center;
  background: linear-gradient(90deg, #fbfaf0, #e6e1bd);
}

.vthumb i {
  width: 4px;
  height: 4px;
  border-radius: 50%;
  background: #cfc9a8;
}

.vthumb-short {
  height: 25px;
  border-bottom: 1px solid #b0a67c;
}

.vthumb-long {
  height: 37px;
  border-top: 1px solid #b0a67c;
}

.chosen {
  flex: 1;
  display: flex;
  align-items: stretch;
  height: 136px;
  border: 1px solid #b0a67c;
  background: #fff;
}

.chosen table {
  flex: 1;
  align-self: flex-start;
  width: 100%;
  table-layout: fixed;
  border-collapse: separate;
  border-spacing: 0;
}

.c-check {
  width: 21px;
}

.c-title {
  width: 213px;
}

.chosen th,
.chosen td {
  height: 18px;
  padding: 0;
  border-right: 1px solid #b0a67c;
  border-bottom: 1px solid #b0a67c;
  text-align: left;
  line-height: 18px;
  white-space: nowrap;
}

.chosen th {
  height: 20px;
  padding-left: 4px;
  background: #f4f1dc;
  font-weight: normal;
  color: #5e4a1a;
}

.chosen tr > :last-child {
  border-right: 0;
}

.chosen .corner {
  background: #cfcab6;
}

.chosen .check-cell {
  padding-left: 4px;
}

.check-cell .check {
  display: block;
}

.chosen .current {
  background: #4b65bc;
}

.item {
  display: flex;
  align-items: center;
  height: 18px;
}

.item .exp {
  margin-right: 5px;
}

.item-icon {
  display: flex;
  justify-content: center;
  width: 14px;
  margin-right: 7px;
}

.chosen .place {
  padding-left: 4px;
}

.side-low {
  margin-left: 3px;
}

.dialog-foot {
  display: flex;
  align-items: center;
  justify-content: flex-end;
  height: 24px;
  padding-right: 6px;
  border-top: 1px solid #b0a67c;
  background: #ebe4d9;
  color: #5e4708;
}

.ok {
  font-size: 12px;
  font-weight: bold;
}

.marks {
  position: absolute;
  left: -2px;
  top: -2px;
  width: 100%;
  height: 100%;
  overflow: visible;
  pointer-events: none;
  fill: none;
  stroke: #f00;
  stroke-width: 3;
}

.marks .tip {
  fill: #f00;
  stroke-width: 2;
}
</style>
